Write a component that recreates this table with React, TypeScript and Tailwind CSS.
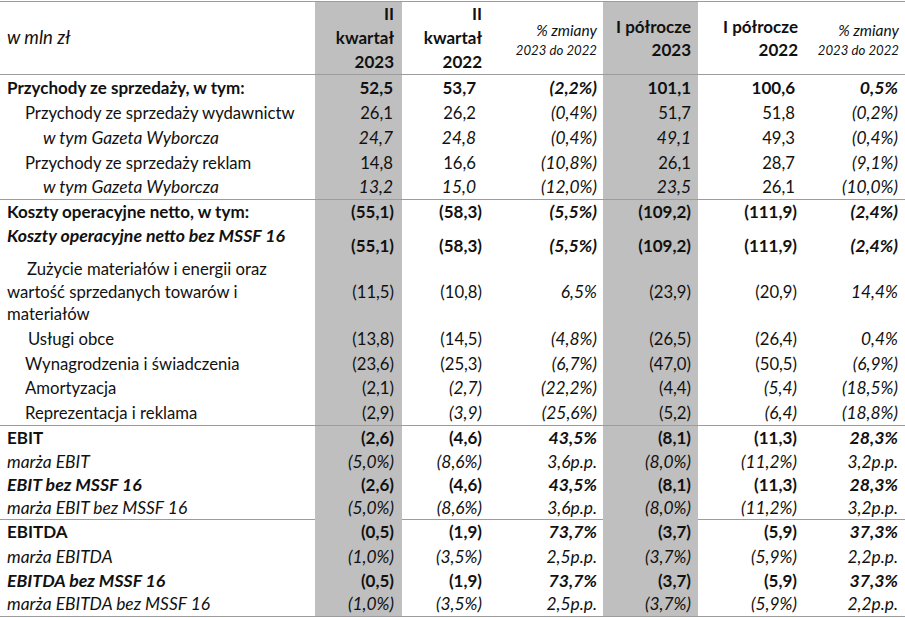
import React from 'react';

type Cell = [string, string];

interface RowData {
  label: string[];
  labelStyle: string;
  indent: string;
  height: string;
  cells: Cell[];
  border?: boolean;
  split?: boolean;
}

const fontStyles: Record<string, string> = {
  r: '',
  b: 'font-bold text-[17px]',
  i: 'italic text-[17.4px]',
  bi: 'font-bold italic text-[17.7px]',
};

const rows: RowData[] = [
  {
    label: ['Przychody ze sprzedaży, w tym:'],
    labelStyle: 'b',
    indent: 'pl-[7px]',
    height: 'h-[25px]',
    cells: [['52,5', 'b'], ['53,7', 'b'], ['(2,2%)', 'bi'], ['101,1', 'b'], ['100,6', 'b'], ['0,5%', 'bi']],
  },
  {
    label: ['Przychody ze sprzedaży wydawnictw'],
    labelStyle: 'r',
    indent: 'pl-[25px]',
    height: 'h-[25px]',
    cells: [['26,1', 'r'], ['26,2', 'r'], ['(0,4%)', 'i'], ['51,7', 'r'], ['51,8', 'r'], ['(0,2%)', 'i']],
  },
  {
    label: ['w tym Gazeta Wyborcza'],
    labelStyle: 'i',
    indent: 'pl-[43px]',
    height: 'h-[25px]',
    cells: [['24,7', 'i'], ['24,8', 'i'], ['(0,4%)', 'i'], ['49,1', 'i'], ['49,3', 'r'], ['(0,4%)', 'i']],
  },
  {
    label: ['Przychody ze sprzedaży reklam'],
    labelStyle: 'r',
    indent: 'pl-[25px]',
    height: 'h-[25px]',
    cells: [['14,8', 'r'], ['16,6', 'r'], ['(10,8%)', 'i'], ['26,1', 'r'], ['28,7', 'r'], ['(9,1%)', 'i']],
  },
  {
    label: ['w tym Gazeta Wyborcza'],
    labelStyle: 'i',
    indent: 'pl-[43px]',
    height: 'h-[25px]',
    border: true,
    cells: [['13,2', 'i'], ['15,0', 'i'], ['(12,0%)', 'i'], ['23,5', 'i'], ['26,1', 'r'], ['(10,0%)', 'i']],
  },
  {
    label: ['Koszty operacyjne netto, w tym:'],
    labelStyle: 'b',
    indent: 'pl-[7px]',
    height: 'h-[24px]',
    cells: [['(55,1)', 'b'], ['(58,3)', 'b'], ['(5,5%)', 'bi'], ['(109,2)', 'b'], ['(111,9)', 'b'], ['(2,4%)', 'bi']],
  },
  {
    label: ['Koszty operacyjne netto bez MSSF 16'],
    labelStyle: 'bi',
    indent: 'pl-[7px]',
    height: 'h-[34px]',
    split: true,
    cells: [['(55,1)', 'b'], ['(58,3)', 'b'], ['(5,5%)', 'bi'], ['(109,2)', 'b'], ['(111,9)', 'b'], ['(2,4%)', 'bi']],
  },
  {
    label: ['Zużycie materiałów i energii oraz', 'wartość sprzedanych towarów i', 'materiałów'],
    labelStyle: 'r',
    indent: 'pl-[7px]',
    height: 'h-[68px]',
    cells: [['(11,5)', 'r'], ['(10,8)', 'r'], ['6,5%', 'i'], ['(23,9)', 'r'], ['(20,9)', 'r'], ['14,4%', 'i']],
  },
  {
    label: ['Usługi obce'],
    labelStyle: 'r',
    indent: 'pl-[28px]',
    height: 'h-[25px]',
    cells: [['(13,8)', 'r'], ['(14,5)', 'r'], ['(4,8%)', 'i'], ['(26,5)', 'r'], ['(26,4)', 'r'], ['0,4%', 'i']],
  },
  {
    label: ['Wynagrodzenia i świadczenia'],
    labelStyle: 'r',
    indent: 'pl-[25px]',
    height: 'h-[25px]',
    cells: [['(23,6)', 'r'], ['(25,3)', 'r'], ['(6,7%)', 'i'], ['(47,0)', 'r'], ['(50,5)', 'r'], ['(6,9%)', 'i']],
  },
  {
    label: ['Amortyzacja'],
    labelStyle: 'r',
    indent: 'pl-[25px]',
    height: 'h-[24px]',
    cells: [['(2,1)', 'r'], ['(2,7)', 'i'], ['(22,2%)', 'i'], ['(4,4)', 'r'], ['(5,4)', 'i'], ['(18,5%)', 'i']],
  },
  {
    label: ['Reprezentacja i reklama'],
    labelStyle: 'r',
    indent: 'pl-[25px]',
    height: 'h-[26px]',
    border: true,
    cells: [['(2,9)', 'r'], ['(3,9)', 'i'], ['(25,6%)', 'i'], ['(5,2)', 'r'], ['(6,4)', 'i'], ['(18,8%)', 'i']],
  },
  {
    label: ['EBIT'],
    labelStyle: 'b',
    indent: 'pl-[7px]',
    height: 'h-[24px]',
    cells: [['(2,6)', 'b'], ['(4,6)', 'b'], ['43,5%', 'bi'], ['(8,1)', 'b'], ['(11,3)', 'b'], ['28,3%', 'bi']],
  },
  {
    label: ['marża EBIT'],
    labelStyle: 'i',
    indent: 'pl-[7px]',
    height: 'h-[23px]',
    cells: [['(5,0%)', 'i'], ['(8,6%)', 'i'], ['3,6p.p.', 'i'], ['(8,0%)', 'i'], ['(11,2%)', 'i'], ['3,2p.p.', 'i']],
  },
  {
    label: ['EBIT bez MSSF 16'],
    labelStyle: 'bi',
    indent: 'pl-[7px]',
    height: 'h-[23px]',
    cells: [['(2,6)', 'b'], ['(4,6)', 'b'], ['43,5%', 'bi'], ['(8,1)', 'b'], ['(11,3)', 'b'], ['28,3%', 'bi']],
  },
  {
    label: ['marża EBIT bez MSSF 16'],
    labelStyle: 'i',
    indent: 'pl-[7px]',
    height: 'h-[24px]',
    border: true,
    cells: [['(5,0%)', 'i'], ['(8,6%)', 'i'], ['3,6p.p.', 'i'], ['(8,0%)', 'i'], ['(11,2%)', 'i'], ['3,2p.p.', 'i']],
  },
  {
    label: ['EBITDA'],
    labelStyle: 'b',
    indent: 'pl-[7px]',
    height: 'h-[24px]',
    cells: [['(0,5)', 'b'], ['(1,9)', 'b'], ['73,7%', 'bi'], ['(3,7)', 'b'], ['(5,9)', 'b'], ['37,3%', 'bi']],
  },
  {
    label: ['marża EBITDA'],
    labelStyle: 'i',
    indent: 'pl-[7px]',
    height: 'h-[25px]',
    cells: [['(1,0%)', 'i'], ['(3,5%)', 'i'], ['2,5p.p.', 'i'], ['(3,7%)', 'i'], ['(5,9%)', 'i'], ['2,2p.p.', 'i']],
  },
  {
    label: ['EBITDA bez MSSF 16'],
    labelStyle: 'bi',
    indent: 'pl-[7px]',
    height: 'h-[23px]',
    cells: [['(0,5)', 'b'], ['(1,9)', 'b'], ['73,7%', 'bi'], ['(3,7)', 'b'], ['(5,9)', 'b'], ['37,3%', 'bi']],
  },
  {
    label: ['marża EBITDA bez MSSF 16'],
    labelStyle: 'i',
    indent: 'pl-[7px]',
    height: 'h-[25px]',
    border: true,
    cells: [['(1,0%)', 'i'], ['(3,5%)', 'i'], ['2,5p.p.', 'i'], ['(3,7%)', 'i'], ['(5,9%)', 'i'], ['2,2p.p.', 'i']],
  },
];

// right padding per value column; positive numbers in col 3 sit a bit further in
const colPad = ['pr-[8px]', 'pr-[8px]', 'pr-[6px]', 'pr-[7px]', 'pr-[8px]', 'pr-[7px]'];
const colPadPositive = ['pr-[9px]', 'pr-[14px]', 'pr-[6px]', 'pr-[7px]', 'pr-[10px]', 'pr-[7px]'];
const gray = [true, false, false, true, false, false];

const gridCols = 'grid grid-cols-[315px_87px_88px_113px_95px_107px_100px]';

const ValueCell = ({ cell, idx, align }: { cell: Cell; idx: number; align: string }) => {
  const [text, style] = cell;
  const isPct = idx === 2 || idx === 5;
  const pad = text.startsWith('(') || isPct ? colPad[idx] : colPadPositive[idx];
  return (
    <div
      className={`flex justify-end ${align} ${pad} ${gray[idx] ? 'bg-[#bfbfbf]' : ''} ${fontStyles[style]}`}
    >
      <span className="leading-[24px] whitespace-nowrap">{text}</span>
    </div>
  );
};

const TableRow = ({ row }: { row: RowData }) => {
  const valueAlign = row.split ? 'items-end' : 'items-center';
  return (
    <div
      className={`${gridCols} ${row.height} ${row.border ? 'border-b border-[#9c9c9c]' : ''}`}
    >
      <div
        className={`flex flex-col whitespace-nowrap ${row.split ? 'justify-start' : 'justify-center'} ${fontStyles[row.labelStyle]}`}
      >
        {row.label.length > 1 ? (
          row.label.map((line, i) => (
            <div key={i} className={`leading-[22.6px] ${i === 0 ? 'pl-[27px]' : 'pl-[7px]'}`}>
              {line}
            </div>
          ))
        ) : (
          <div className={`leading-[24px] ${row.indent}`}>{row.label[0]}</div>
        )}
      </div>
      {row.cells.map((cell, i) => (
        <ValueCell key={i} cell={cell} idx={i} align={valueAlign} />
      ))}
    </div>
  );
};

const HeaderRow = () => {
  return (
    <div className={`${gridCols} h-[73px] border-b border-[#9c9c9c] font-bold text-[17px]`}>
      <div className="flex items-center pl-[7px] font-normal italic text-[18.5px]">w mln zł</div>
      <div className="flex flex-col justify-center items-end pr-[8px] bg-[#bfbfbf] leading-[24px]">
        <span>II</span>
        <span>kwartał</span>
        <span>2023</span>
      </div>
      <div className="flex flex-col justify-center items-end pr-[8px] leading-[24px]">
        <span>II</span>
        <span>kwartał</span>
        <span>2022</span>
      </div>
      <div className="flex flex-col justify-center items-end pr-[6px] pt-[4px] text-[14px] leading-[20px] font-normal italic whitespace-nowrap">
        <span className="text-[15.5px]">% zmiany</span>
        <span className="text-[13.2px]">2023 do 2022</span>
      </div>
      <div className="flex flex-col justify-center items-end pr-[7px] bg-[#bfbfbf] leading-[23px]">
        <span>I półrocze</span>
        <span>2023</span>
      </div>
      <div className="flex flex-col justify-center items-end pr-[7px] leading-[23px]">
        <span>I półrocze</span>
        <span>2022</span>
      </div>
      <div className="flex flex-col justify-center items-end pr-[6px] pt-[4px] text-[14px] leading-[20px] font-normal italic whitespace-nowrap">
        <span className="text-[15.5px]">% zmiany</span>
        <span className="text-[13.2px]">2023 do 2022</span>
      </div>
    </div>
  );
};

const App = () => {
  return (
    <div className="w-[905px] h-[618px] bg-white overflow-hidden pt-[1px] font-['Lato',_'Noto_Sans',_sans-serif] text-[16.7px] text-[#111111]">
      <div className="border-t border-[#9c9c9c]">
        <HeaderRow />
        {rows.map((row, i) => (
          <TableRow key={i} row={row} />
        ))}
      </div>
    </div>
  );
};

export default App;
